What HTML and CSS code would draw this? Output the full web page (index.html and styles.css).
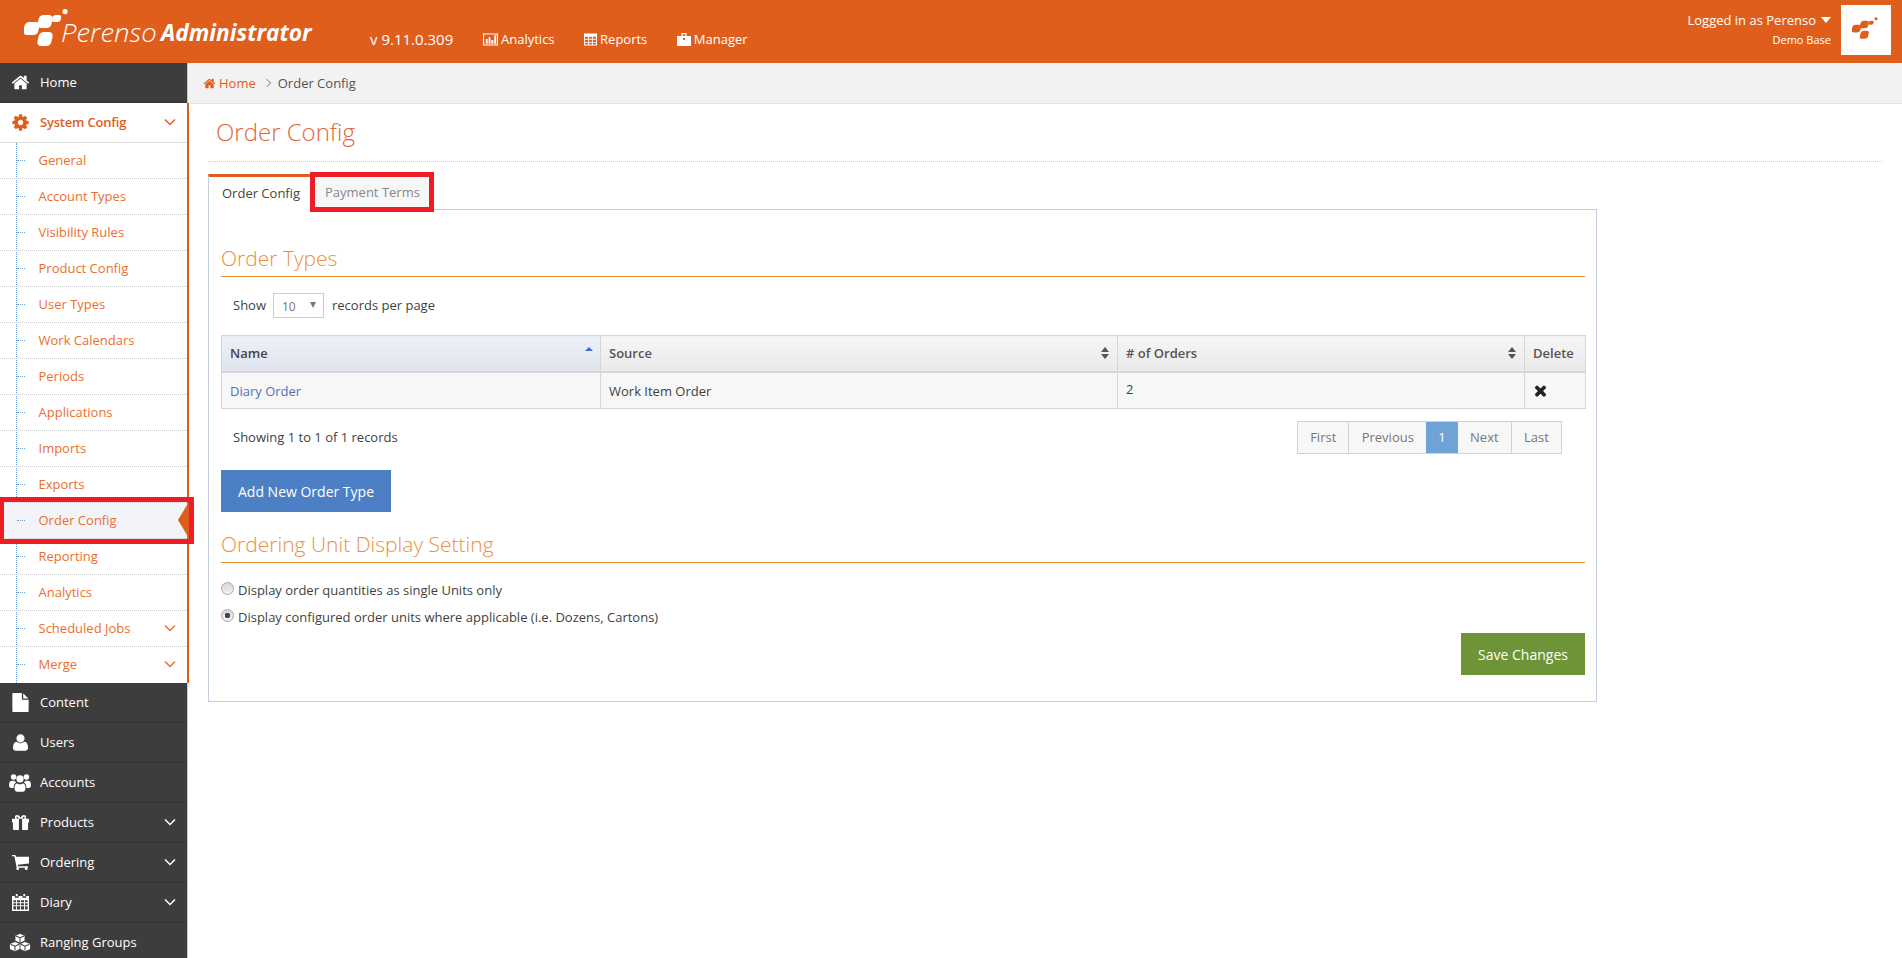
FILE: index.html
```html
<!DOCTYPE html>
<html lang="en">
<head>
  <meta charset="UTF-8">
  <title>Order Config</title>
  <link rel="stylesheet" href="styles.css">
</head>
<body>
  <svg class="defs" width="0" height="0">
    <symbol id="i-home" viewBox="0 0 1792 1792"><path d="M1472 992v480q0 26-19 45t-45 19h-384v-384h-256v384h-384q-26 0-45-19t-19-45v-480q0-1 .5-3t.5-3l575-474 575 474q1 2 1 6zm223-69l-62 74q-8 9-21 11h-3q-13 0-21-7l-692-577-692 577q-12 8-24 7-13-2-21-11l-62-74q-8-10-7-23.500t11-21.500l719-599q32-26 76-26t76 26l244 204v-195q0-14 9-23t23-9h192q14 0 23 9t9 23v408l219 182q10 8 11 21.500t-7 23.500z"/></symbol>
    <symbol id="i-cog" viewBox="0 0 1792 1792"><path d="M1152 896q0-106-75-181t-181-75-181 75-75 181 75 181 181 75 181-75 75-181zm512-109v222q0 12-8 23t-20 13l-185 28q-19 54-39 91 35 50 107 138 10 12 10 25t-9 23q-27 37-99 108t-94 71q-12 0-26-9l-138-108q-44 23-91 38-16 136-29 186-7 28-36 28h-222q-14 0-24.500-8.500t-11.500-21.500l-28-184q-49-16-90-37l-141 107q-10 9-25 9-14 0-25-11-126-114-165-168-7-10-7-23 0-12 8-23 15-21 51-66.500t54-70.500q-27-50-41-99l-183-27q-13-2-21-12.500t-8-23.500v-222q0-12 8-23t19-13l186-28q14-46 39-92-40-57-107-138-10-12-10-24 0-10 9-23 26-36 98.500-107.500t94.500-71.500q13 0 26 10l138 107q44-23 91-38 16-136 29-186 7-28 36-28h222q14 0 24.500 8.500t11.500 21.500l28 184q49 16 90 37l142-107q9-9 24-9 13 0 25 10 129 119 165 170 7 8 7 22 0 12-8 23-15 21-51 66.500t-54 70.500q26 50 41 98l183 28q13 2 21 12.500t8 23.500z"/></symbol>
    <symbol id="i-file" viewBox="0 0 1792 1792"><path d="M1596 476q14 14 28 36h-472V40q22 14 36 28zM1120 640h544v1056q0 40-28 68t-68 28H224q-40 0-68-28t-28-68V96q0-40 28-68t68-28h800v544q0 40 28 68t68 28z"/></symbol>
    <symbol id="i-user" viewBox="0 0 1792 1792"><path d="M1600 1405q0 120-73 189.500t-194 69.500h-874q-121 0-194-69.500t-73-189.500q0-53 3.500-103.500t14-109 26.500-108.500 43-97.500 62-81 85.500-53.500 111.500-20q9 0 42 21.500t74.500 48 108 48 133.500 21.500 133.500-21.500 108-48 74.500-48 42-21.500q61 0 111.500 20t85.500 53.500 62 81 43 97.500 26.500 108.500 14 109 3.500 103.500zm-320-893q0 159-112.500 271.500t-271.500 112.500-271.500-112.500-112.500-271.500 112.500-271.500 271.500-112.500 271.500 112.500 112.500 271.500z"/></symbol>
    <symbol id="i-users" viewBox="0 0 24 20"><circle cx="5" cy="4" r="3"/><circle cx="19" cy="4" r="3"/><circle cx="12" cy="6" r="4"/><path d="M0 13q0-5 3-5h3q1 1 2 2-3 1-3 6H2q-2 0-2-3zM24 13q0-5-3-5h-3q-1 1-2 2 3 1 3 6h3q2 0 2-3zM6 16q0-5 3-5 3 2 6 0 3 0 3 5 0 4-3 4H9q-3 0-3-4z"/></symbol>
    <symbol id="i-gift" viewBox="0 0 18 16"><path fill-rule="evenodd" d="M5.500 0Q8 0 9 3q1-3 3.500-3Q15 0 15 2.300q0 1-.6 1.700H18v4h-1v7q0 1-1 1H2q-1 0-1-1V8H0V4h3.600Q3 3.300 3 2.300 3 0 5.500 0zM7 4 6 2.200Q5 1.500 4.600 2.300 4.600 4 6 4zm4 0h1q1.400 0 1.400-1.700-.4-.8-1.400-.1zM7.300 4v12h3.400V4z"/></symbol>
    <symbol id="i-cart" viewBox="0 0 18 16"><path d="M0 0h3q1 0 1 1l.3 1H18v7l-12 1.500.4 1.500H17v1.500H5L2.500 1.500H0z"/><circle cx="6" cy="14.500" r="1.500"/><circle cx="15" cy="14.500" r="1.500"/></symbol>
    <symbol id="i-cal" viewBox="0 0 18 18"><path fill-rule="evenodd" d="M4 0h2v2.500H4zM12 0h2v2.500h-2zM0 2h3v2h4V2h4v2h4V2h3v16H0zM1.500 6.500v2.200h2.700V6.500zm3.700 0v2.200h3.300V6.500zm4.300 0v2.200h3.300V6.500zm4.300 0v2.200h2.700V6.500zM1.500 9.700V12h2.700V9.700zm3.700 0V12h3.300V9.700zm4.300 0V12h3.300V9.700zm4.300 0V12h2.700V9.700zM1.500 13v3.500h2.700V13zm3.700 0v3.500h3.300V13zm4.300 0v3.500h3.300V13zm4.300 0v3.500h2.700V13z"/></symbol>
    <symbol id="i-cubes" viewBox="0 0 24 20">
      <path d="M12 .5 17 2.500V8L12 10 7 8V2.500zM6.500 9.500 11.500 11.500V17L6.500 19.500 1 17V11.500zM17.500 9.500 23 11.500V17L17.500 19.500 12.500 17V11.500z"/>
      <path d="M7.500 3 12 4.800 16.500 3M12 4.800V9.500M1.800 12 6.500 14 11 12M6.500 14V19M13 12 17.500 14 22.300 12M17.500 14V19" fill="none" stroke="#3d3d3d" stroke-width="1.100"/>
    </symbol>
    <symbol id="i-chart" viewBox="0 0 16 13"><path fill-rule="evenodd" d="M0 0h16v13H0zM1.200 1.200v10.600h13.600V1.200zM3 6h2v5H3zM6 4h2v7H6zm3 3h2v4H9zm3-5h2v9h-2z"/></symbol>
    <symbol id="i-table" viewBox="0 0 14 13"><path fill-rule="evenodd" d="M0 0h14v13H0zM1 3.500v2.300h3.500V3.500zm4.500 0v2.300h3V3.500zm4 0v2.300H13V3.500zM1 6.800v2.300h3.500V6.800zm4.500 0v2.300h3V6.800zm4 0v2.300H13V6.800zM1 10.100V12h3.500v-1.900zm4.500 0V12h3v-1.900zm4 0V12H13v-1.900z"/></symbol>
    <symbol id="i-case" viewBox="0 0 14 13"><path fill-rule="evenodd" d="M4.500 0h5v3H14v10H0V3h4.500zM5.700 1.200V3h2.600V1.200zM6 5v2h2V5z"/></symbol>
    <symbol id="i-times" viewBox="0 0 1792 1792"><path d="M1490 1322q0 40-28 68l-136 136q-28 28-68 28t-68-28l-294-294-294 294q-28 28-68 28t-68-28l-136-136q-28-28-28-68t28-68l294-294-294-294q-28-28-28-68t28-68l136-136q28-28 68-28t68 28l294 294 294-294q28-28 68-28t68 28l136 136q28 28 28 68t-28 68l-294 294 294 294q28 28 28 68z"/></symbol>
    <symbol id="i-mark" viewBox="0 0 46 37">
      <rect width="15" height="13" y="13" rx="4.500" transform="translate(4 0) skewX(-12)"/>
      <rect x="14" y="6" width="14" height="13" rx="4.500" transform="translate(2.700 0) skewX(-12)"/>
      <rect x="14" y="23" width="14" height="14" rx="4.500" transform="translate(6.400 0) skewX(-12)"/>
      <rect x="28" y="6" width="9" height="7" rx="3" transform="translate(2 0) skewX(-12)"/>
      <circle cx="41" cy="2.600" r="2.600"/>
    </symbol>
    <symbol id="i-chev" viewBox="0 0 12 8"><path d="M1 1.500 6 6.500 11 1.500" fill="none" stroke="currentColor" stroke-width="1.500"/></symbol>
  </svg>

  <header class="topbar">
    <a class="brand">
      <svg class="brand-mark"><use href="#i-mark"/></svg>
      <span class="brand-name">Perenso</span>
      <span class="brand-role">Administrator</span>
    </a>
    <span class="version">v 9.11.0.309</span>
    <nav class="topnav">
      <a><svg class="ico-chart"><use href="#i-chart"/></svg>Analytics</a>
      <a><svg class="ico-table"><use href="#i-table"/></svg>Reports</a>
      <a><svg class="ico-case"><use href="#i-case"/></svg>Manager</a>
    </nav>
    <div class="account">
      <div class="account-text">
        <div class="account-user">Logged in as Perenso<span class="caret"></span></div>
        <div class="account-base">Demo Base</div>
      </div>
      <div class="account-logo"><svg><use href="#i-mark"/></svg></div>
    </div>
  </header>

  <div class="layout">
    <aside class="sidebar">
      <a class="side-link"><svg class="side-ico"><use href="#i-home"/></svg>Home</a>
      <div class="side-open">
        <a class="side-head"><svg class="side-ico"><use href="#i-cog"/></svg>System Config<svg class="chev"><use href="#i-chev"/></svg></a>
        <ul class="sub">
          <li>General</li>
          <li>Account Types</li>
          <li>Visibility Rules</li>
          <li>Product Config</li>
          <li>User Types</li>
          <li>Work Calendars</li>
          <li>Periods</li>
          <li>Applications</li>
          <li>Imports</li>
          <li>Exports</li>
          <li class="current">Order Config</li>
          <li>Reporting</li>
          <li>Analytics</li>
          <li>Scheduled Jobs<svg class="chev"><use href="#i-chev"/></svg></li>
          <li>Merge<svg class="chev"><use href="#i-chev"/></svg></li>
        </ul>
      </div>
      <a class="side-link"><svg class="side-ico"><use href="#i-file"/></svg>Content</a>
      <a class="side-link"><svg class="side-ico"><use href="#i-user"/></svg>Users</a>
      <a class="side-link"><svg class="side-ico wide"><use href="#i-users"/></svg>Accounts</a>
      <a class="side-link"><svg class="side-ico tight"><use href="#i-gift"/></svg>Products<svg class="chev"><use href="#i-chev"/></svg></a>
      <a class="side-link"><svg class="side-ico tight"><use href="#i-cart"/></svg>Ordering<svg class="chev"><use href="#i-chev"/></svg></a>
      <a class="side-link"><svg class="side-ico tight"><use href="#i-cal"/></svg>Diary<svg class="chev"><use href="#i-chev"/></svg></a>
      <a class="side-link"><svg class="side-ico wide"><use href="#i-cubes"/></svg>Ranging Groups</a>
    </aside>

    <main class="main">
      <div class="crumbs">
        <a><svg><use href="#i-home"/></svg>Home</a>
        <span class="crumb-sep"></span>
        <span>Order Config</span>
      </div>
      <div class="page">
        <h1 class="page-title">Order Config</h1>
        <div class="tabs">
          <a class="tab active">Order Config</a>
          <a class="tab marked">Payment Terms</a>
        </div>
        <section class="panel">
          <h2 class="section-title">Order Types</h2>
          <div class="length">
            Show
            <span class="fake-select">10<span class="select-arrow"></span></span>
            records per page
          </div>
          <table class="grid">
            <thead>
              <tr>
                <th class="col-name sorted">Name<span class="sort-up"></span></th>
                <th class="col-source">Source<span class="sort-both"></span></th>
                <th class="col-orders"># of Orders<span class="sort-both"></span></th>
                <th class="col-delete">Delete</th>
              </tr>
            </thead>
            <tbody>
              <tr>
                <td class="low"><a>Diary Order</a></td>
                <td class="low">Work Item Order</td>
                <td class="high">2</td>
                <td><svg class="del"><use href="#i-times"/></svg></td>
              </tr>
            </tbody>
          </table>
          <div class="table-foot">
            <span>Showing 1 to 1 of 1 records</span>
            <div class="pager">
              <a>First</a><a>Previous</a><a class="on">1</a><a>Next</a><a>Last</a>
            </div>
          </div>
          <button class="btn btn-blue">Add New Order Type</button>
          <h2 class="section-title second">Ordering Unit Display Setting</h2>
          <label class="radio"><input type="radio" name="unit">Display order quantities as single Units only</label>
          <label class="radio"><input type="radio" name="unit" checked>Display configured order units where applicable (i.e. Dozens, Cartons)</label>
          <div class="actions">
            <button class="btn btn-green">Save Changes</button>
          </div>
        </section>
      </div>
    </main>
  </div>
</body>
</html>
```

FILE: styles.css
```css
:root {
  --orange: #e05e1c;
  --dark: #3d3d3d;
  --panel-line: #c3cfdc;
  --heading: #ec8f3d;
}
* { box-sizing: border-box; margin: 0; padding: 0; }
html, body { height: 100%; overflow: hidden; }
body {
  background: #fff;
  font-family: "Open Sans", sans-serif;
  font-size: 13px;
  color: #3f3f3f;
}
.defs { position: absolute; }
svg { fill: currentColor; display: block; }
a { color: inherit; text-decoration: none; }

/* top bar */
.topbar {
  height: 63px;
  background: var(--orange);
  color: #fff;
  display: flex;
}
.brand {
  width: 369px;
  padding-left: 24px;
  display: flex;
  align-items: flex-start;
  flex: none;
}
.brand-mark { width: 46px; height: 37px; margin-top: 9px; flex: none; }
.brand-name, .brand-role {
  line-height: 38px;
  margin-top: 13px;
  font-style: italic;
  display: inline-block;
  transform-origin: left center;
}
.brand-name { font-size: 25px; font-weight: 300; width: 100px; margin-left: -9px; transform: scaleX(1.1); }
.brand-role { font-size: 24px; font-weight: 700; transform: scaleX(.945); }
.version { font-size: 15px; line-height: 78px; width: 114px; padding-left: 1px; flex: none; }
.topnav { display: flex; gap: 29.500px; }
.topnav a { display: flex; align-items: center; height: 78px; gap: 3px; }
.topnav svg { height: 13px; }
.ico-chart { width: 15px; }
.ico-table { width: 13px; }
.ico-case { width: 14px; }
.account { margin-left: auto; display: flex; padding: 5px 11px 0 0; }
.account-text { text-align: right; margin-right: 10px; }
.account-user { line-height: 30px; }
.caret {
  display: inline-block;
  border: 5px solid transparent;
  border-top: 6px solid #fff;
  border-bottom: 0;
  margin-left: 5px;
  vertical-align: 2px;
}
.account-base { font-size: 11px; font-weight: 500; line-height: 11px; margin-top: -1px; }
.account-logo {
  width: 50px;
  height: 50px;
  background: #fff;
  color: var(--orange);
  padding: 12px 11px;
}
.account-logo svg { width: 27px; height: 22px; }

/* sidebar */
.layout { display: flex; height: 895px; }
.sidebar {
  width: 188px;
  flex: none;
  background: var(--dark);
  color: #fff;
  border-right: 1px solid #c9c9c9;
  position: relative;
  z-index: 1;
}
.side-link, .side-head {
  display: flex;
  align-items: center;
  height: 40px;
  border-bottom: 1px solid #333;
  padding: 0 0 2px 40px;
  position: relative;
}
.side-ico {
  position: absolute;
  left: 11px;
  top: 10px;
  width: 19px;
  height: 19px;
}
.side-ico.tight { left: 12px; top: 11px; width: 17px; height: 17px; }
.side-ico.wide { left: 9px; width: 22px; height: 19px; top: 10px; }
.chev { width: 12px; height: 8px; margin-left: auto; margin-right: 11px; flex: none; }
.side-open {
  background: #fff;
  color: #e96f2f;
  width: 189px;
  border-right: 2px solid var(--orange);
  position: relative;
}
.side-head {
  font-weight: 600;
  letter-spacing: -.2px;
  color: var(--orange);
  background: #fff;
  border-bottom: 1px solid #ddd;
}
.sub { list-style: none; position: relative; }
.sub::before {
  content: "";
  position: absolute;
  left: 16px;
  top: 0;
  bottom: 0;
  border-left: 1px dotted #6f9fd8;
}
.sub li {
  height: 36px;
  padding: 0 0 2px 38.500px;
  border-bottom: 1px dotted #ccc;
  display: flex;
  align-items: center;
  position: relative;
}
.sub li:last-child { border-bottom: 0; }
.sub li::before {
  content: "";
  position: absolute;
  left: 17px;
  top: 17px;
  width: 8px;
  border-top: 1px dotted #6f9fd8;
}
.sub li.current { background: #f3f4f9; }
.sub li.current::after {
  content: "";
  position: absolute;
  right: 0;
  top: 2px;
  border: 15px solid transparent;
  border-right: 9px solid var(--orange);
  border-left: 0;
}
/* red annotation round the current item */
.side-open::after {
  content: "";
  box-sizing: border-box;
  position: absolute;
  left: 0;
  top: 394px;
  width: 194px;
  height: 47px;
  border: 5px solid #ee1c25;
  border-left-width: 4px;
}

/* main */
.main { flex: 1; min-width: 0; }
.crumbs {
  height: 41px;
  background: #f2f2f2;
  border-bottom: 1px solid #e2e2e2;
  padding-left: 15px;
  display: flex;
  align-items: center;
  color: #555;
}
.crumbs a { color: var(--orange); display: flex; align-items: center; gap: 3px; }
.crumbs svg { width: 13px; height: 13px; }
.crumb-sep {
  width: 6px;
  height: 6px;
  border-top: 1px solid #999;
  border-right: 1px solid #999;
  transform: rotate(45deg);
  margin: 0 8px 0 8px;
}
.page { padding: 0 20px; }
.page-title {
  font-size: 24px;
  font-weight: 300;
  color: #e0683a;
  line-height: 33px;
  padding: 11px 0 13px 8px;
  border-bottom: 1px dotted #ccc;
}
.tabs {
  display: flex;
  margin-top: 12px;
  height: 36px;
  width: 1389px;
  border-bottom: 1px solid var(--panel-line);
}
.tab { height: 35px; white-space: nowrap; }
.tab.active {
  width: 102px;
  height: 36px;
  border-top: 3px solid var(--orange);
  border-left: 1px solid var(--panel-line);
  background: #fff;
  line-height: 32px;
  color: #444;
  padding-left: 13px;
}
.tab.marked {
  color: #888;
  background: #f7f7f7;
  position: relative;
  width: 114px;
  margin-left: 5px;
  padding-left: 10px;
  line-height: 36px;
}
.tab.marked::after {
  content: "";
  position: absolute;
  left: -5px;
  top: -2px;
  right: -5px;
  bottom: -3px;
  border: 5px solid #ee1c25;
}
.panel {
  width: 1389px;
  height: 492px;
  border: 1px solid var(--panel-line);
  border-top: 0;
  padding: 34px 11px 0 12px;
}
.section-title {
  font-size: 21px;
  font-weight: 300;
  color: var(--heading);
  line-height: 28px;
  padding-bottom: 4px;
  border-bottom: 1px solid #e8912d;
}
.length {
  display: flex;
  align-items: center;
  gap: 8px;
  padding-left: 12px;
  margin-top: 15px;
  height: 26px;
}
.fake-select {
  width: 51px;
  height: 25px;
  margin-left: -1px;
  border: 1px solid #ccc;
  color: #777;
  font-size: 12px;
  padding-left: 8px;
  line-height: 25px;
  position: relative;
}
.select-arrow {
  position: absolute;
  right: 7px;
  top: 8px;
  border: 3.500px solid transparent;
  border-top: 6px solid #777;
  border-bottom: 0;
}
.grid {
  margin-top: 17px;
  width: 1364px;
  table-layout: fixed;
  border-collapse: collapse;
}
.col-name { width: 379px; }
.col-source { width: 517px; }
.col-orders { width: 407px; }
.col-delete { width: 61px; }
.grid th {
  height: 36px;
  text-align: left;
  padding: 0 8px;
  font-weight: 600;
  color: #555;
  background: linear-gradient(#f6f6f6, #e9e9e9);
  border: 1px solid #d6d6d6;
  border-bottom-width: 2px;
  position: relative;
}
.grid th.sorted { background: linear-gradient(#eef1f8, #dfe3ed); color: #444; }
.grid td {
  height: 37px;
  padding: 0 8px;
  background: #f7f7f7;
  border: 1px solid #d6d6d6;
}
.grid td.low { padding-top: 2px; }
.grid td.high { padding-bottom: 2px; }
.grid td a { color: #4a74b8; }
.sort-up {
  position: absolute;
  right: 7px;
  top: 11px;
  border: 4px solid transparent;
  border-bottom: 4px solid #3a6fc0;
  border-top: 0;
}
.sort-both {
  position: absolute;
  right: 8px;
  top: 11px;
  width: 8px;
  height: 12px;
}
.sort-both::before, .sort-both::after {
  content: "";
  position: absolute;
  left: 0;
  border: 4px solid transparent;
  border-bottom: 5px solid #555;
  border-top: 0;
}
.sort-both::after { top: 7px; border-bottom: 0; border-top: 5px solid #555; }
.del { width: 17px; height: 17px; margin-left: -1px; color: #222; }
.table-foot {
  display: flex;
  justify-content: space-between;
  align-items: center;
  padding: 0 23px 0 12px;
  margin-top: 11px;
  height: 34px;
}
.pager { display: flex; border: 1px solid #d2d2d2; height: 33px; }
.pager a {
  line-height: 31px;
  padding: 0 12.200px;
  color: #777;
  background: #f7f7f7;
  border-left: 1px solid #d2d2d2;
}
.pager a:first-child { border-left: 0; }
.pager a.on { background: #6fa3d6; color: #fff; border-left: 0; }
.pager a.on + a { border-left: 0; }
.btn {
  border: 0;
  font-family: inherit;
  color: #fff;
  font-size: 14px;
  height: 42px;
  display: block;
}
.btn-blue { background: #4d7fc4; width: 170px; margin-top: 16px; }
.btn-green { background: #6e9437; width: 124px; }
.section-title.second { margin-top: 18px; }
.radio { display: flex; align-items: center; gap: 4px; height: 27px; }
.section-title.second + .radio { margin-top: 13px; }
.radio input {
  appearance: none;
  width: 13px;
  height: 13px;
  border-radius: 50%;
  border: 1px solid #aaa;
  background: linear-gradient(#d6d6d6, #f2f2f2);
  position: relative;
  top: -1px;
}
.radio input:checked {
  background: radial-gradient(circle, #444 0 2.500px, transparent 3px), linear-gradient(#d6d6d6, #f2f2f2);
}
.actions { display: flex; justify-content: flex-end; margin-top: 3px; }
```
